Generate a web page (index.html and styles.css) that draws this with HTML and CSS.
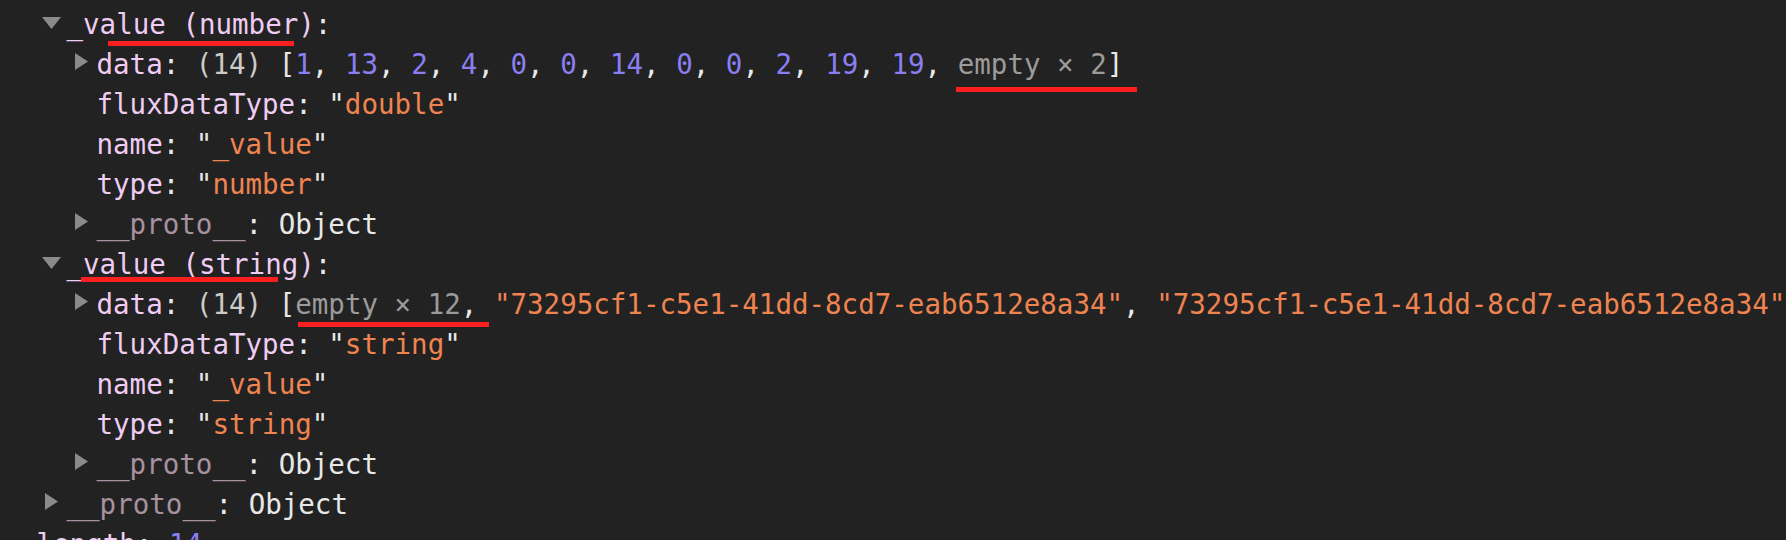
FILE: index.html
```html
<!DOCTYPE html>
<html>
<head>
<meta charset="utf-8">
<link rel="stylesheet" href="styles.css">
</head>
<body>
<div class="console">
  <div class="node">
    <div class="row"><span class="tog"><svg class="down" width="19" height="12" viewBox="0 0 19 12"><path d="M0 0H19L9.5 12Z"/></svg></span><span class="key">_value (number)</span><span class="p">:</span></div>
    <div class="children">
      <div class="row"><span class="tog"><svg class="right" width="13" height="17" viewBox="0 0 13 17"><path d="M0 0L13 8.5L0 17Z"/></svg></span><span class="key">data</span><span class="p">: </span><span class="len">(14)</span><span class="p"> [</span><span class="num">1</span><span class="p">, </span><span class="num">13</span><span class="p">, </span><span class="num">2</span><span class="p">, </span><span class="num">4</span><span class="p">, </span><span class="num">0</span><span class="p">, </span><span class="num">0</span><span class="p">, </span><span class="num">14</span><span class="p">, </span><span class="num">0</span><span class="p">, </span><span class="num">0</span><span class="p">, </span><span class="num">2</span><span class="p">, </span><span class="num">19</span><span class="p">, </span><span class="num">19</span><span class="p">, </span><span class="empty">empty × 2</span><span class="p">]</span></div>
      <div class="row leaf"><span class="key">fluxDataType</span><span class="p">: "</span><span class="str">double</span><span class="p">"</span></div>
      <div class="row leaf"><span class="key">name</span><span class="p">: "</span><span class="str">_value</span><span class="p">"</span></div>
      <div class="row leaf"><span class="key">type</span><span class="p">: "</span><span class="str">number</span><span class="p">"</span></div>
      <div class="row"><span class="tog"><svg class="right" width="13" height="17" viewBox="0 0 13 17"><path d="M0 0L13 8.5L0 17Z"/></svg></span><span class="proto">__proto__</span><span class="p">: Object</span></div>
    </div>
  </div>
  <div class="node">
    <div class="row"><span class="tog"><svg class="down" width="19" height="12" viewBox="0 0 19 12"><path d="M0 0H19L9.5 12Z"/></svg></span><span class="key">_value (string)</span><span class="p">:</span></div>
    <div class="children">
      <div class="row"><span class="tog"><svg class="right" width="13" height="17" viewBox="0 0 13 17"><path d="M0 0L13 8.5L0 17Z"/></svg></span><span class="key">data</span><span class="p">: </span><span class="len">(14)</span><span class="p"> [</span><span class="empty">empty × 12</span><span class="p">, </span><span class="str">"73295cf1-c5e1-41dd-8cd7-eab6512e8a34"</span><span class="p">, </span><span class="str">"73295cf1-c5e1-41dd-8cd7-eab6512e8a34"</span></div>
      <div class="row leaf"><span class="key">fluxDataType</span><span class="p">: "</span><span class="str">string</span><span class="p">"</span></div>
      <div class="row leaf"><span class="key">name</span><span class="p">: "</span><span class="str">_value</span><span class="p">"</span></div>
      <div class="row leaf"><span class="key">type</span><span class="p">: "</span><span class="str">string</span><span class="p">"</span></div>
      <div class="row"><span class="tog"><svg class="right" width="13" height="17" viewBox="0 0 13 17"><path d="M0 0L13 8.5L0 17Z"/></svg></span><span class="proto">__proto__</span><span class="p">: Object</span></div>
    </div>
  </div>
  <div class="row"><span class="tog"><svg class="right" width="13" height="17" viewBox="0 0 13 17"><path d="M0 0L13 8.5L0 17Z"/></svg></span><span class="proto">__proto__</span><span class="p">: Object</span></div>
  <div class="row flat"><span class="key">length</span><span class="p">: </span><span class="num">14</span></div>

  <div class="mark mark-a"></div>
  <div class="mark mark-b"></div>
  <div class="mark mark-c"></div>
  <div class="mark mark-d"></div>
</div>
</body>
</html>
```
FILE: styles.css
```css
html, body {
  margin: 0;
  padding: 0;
  background: #222222;
  overflow: hidden;
}

.console {
  position: relative;
  padding: 3.5px 0 0 36.5px;
  font-family: "DejaVu Sans Mono", "Liberation Mono", monospace;
  font-size: 27.5px;
  line-height: 40px;
  color: #e8e8e8;
  height: 540px;
  box-sizing: border-box;
}

.row {
  display: flex;
  align-items: center;
  height: 40px;
  white-space: pre;
}

.row.leaf {
  padding-left: 30px;
}

.children {
  padding-left: 30px;
}

.tog {
  width: 30px;
  flex: none;
  display: flex;
  justify-content: center;
  align-items: center;
  height: 40px;
}

.tog svg {
  fill: #8b8b8b;
  display: block;
}

.tog svg.down {
  margin-top: -1px;
}

.tog svg.right {
  margin-top: -4px;
}

.key { color: #efcdf3; }
.proto { color: #a7919f; }
.p { color: #e8e8e8; }
.len { color: #cbcbcb; }
.num { color: #8a7ff2; }
.str { color: #ef8450; }
.empty { color: #9b9b9b; }

.mark {
  position: absolute;
  height: 5px;
  background: #fc1f1f;
}

.mark-a { left: 108px; top: 41px; width: 186px; }
.mark-b { left: 956px; top: 87px; width: 181px; }
.mark-c { left: 81px; top: 277px; width: 197px; }
.mark-d { left: 298px; top: 322px; width: 191px; }
```
